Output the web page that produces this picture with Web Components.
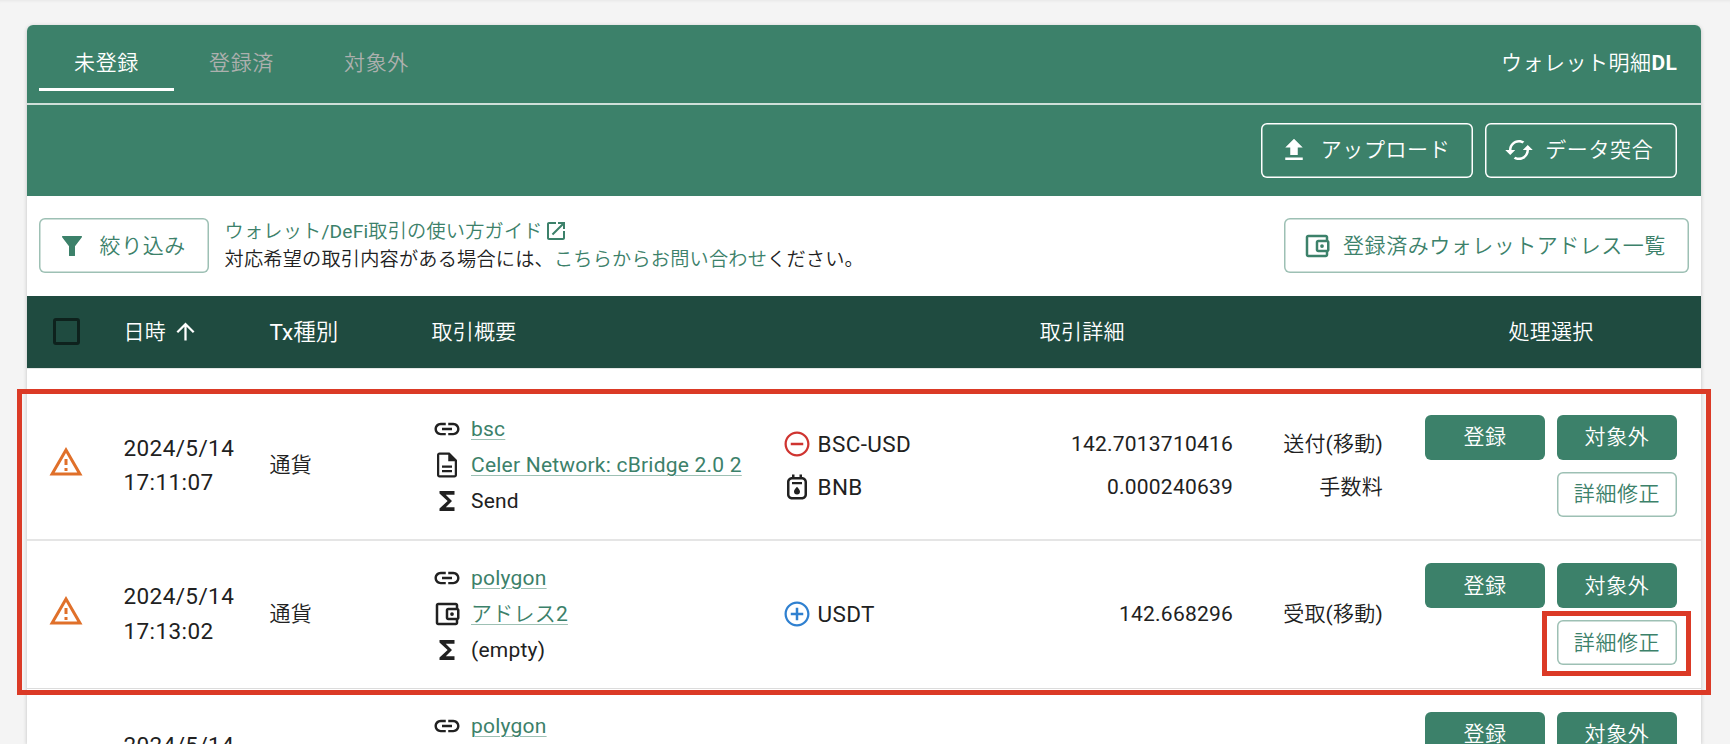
<!DOCTYPE html>
<html lang="ja">
<head>
<meta charset="utf-8">
<title>ウォレット明細</title>
<style>
    body {
        margin: 0;
        height: 744px;
        overflow: hidden;
        background: #f4f4f4;
        box-shadow: inset 0 3px 3px -2px rgba(0,0,0,0.06);
        color: #212121;
        font-family: Roboto, "Noto Sans CJK JP DemiLight", "Noto Sans CJK JP Light", "Noto Sans CJK JP", sans-serif;
        font-size: 21px;
        line-height: 30px;
        letter-spacing: 0.22px;
        --green: #3c816a;
        --dark: #1f4b40;
        --red: #db3a26;
    }
</style>
</head>
<body>
<wallet-page></wallet-page>

<script>
const icons = {
    upload: 'M5 20h14v-2H5v2zM5 10h4v6h6v-6h4l-7-7-7 7z',
    cached: 'M19 8l-4 4h3c0 3.31-2.69 6-6 6-1.01 0-1.97-.25-2.8-.7l-1.46 1.46C8.97 19.54 10.43 20 12 20c4.42 0 8-3.58 8-8h3l-4-4zM6 12c0-3.31 2.69-6 6-6 1.01 0 1.97.25 2.8.7l1.46-1.46C15.03 4.46 13.57 4 12 4c-4.42 0-8 3.58-8 8H1l4 4 4-4H6z',
    filter: 'M4.1 4h15.8v1l-5.5 7.2v7.3q0 .5-.5 .5h-3.8q-.5 0-.5-.5v-7.3L4.1 5z',
    wallet: 'M21 7.28V5c0-1.1-.9-2-2-2H5c-1.11 0-2 .9-2 2v14c0 1.1.89 2 2 2h14c1.1 0 2-.9 2-2v-2.28c.59-.35 1-.98 1-1.72V9c0-.74-.41-1.38-1-1.72zM20 9v6h-7V9h7zM5 19V5h14v2h-6c-1.1 0-2 .9-2 2v6c0 1.1.9 2 2 2h6v2H5zM16 10.5a1.5 1.5 0 1 0 0 3 1.5 1.5 0 1 0 0-3z',
    open: 'M19 19H5V5h7V3H5c-1.11 0-2 .9-2 2v14c0 1.1.89 2 2 2h14c1.1 0 2-.9 2-2v-7h-2v7zM14 3v2h3.59l-9.83 9.83 1.41 1.41L19 6.41V10h2V3h-7z',
    up: 'M4 12l1.41 1.41L11 7.83V20h2V7.83l5.58 5.59L20 12l-8-8-8 8z',
    warn: 'M12 5.99L19.53 19H4.47L12 5.99M12 2L1 21h22L12 2zm1 14h-2v2h2v-2zm0-6h-2v4h2v-4z',
    link: 'M3.9 12c0-1.71 1.39-3.1 3.1-3.1h4V7H7c-2.76 0-5 2.24-5 5s2.24 5 5 5h4v-1.9H7c-1.71 0-3.1-1.39-3.1-3.1zM8 13h8v-2H8v2zm9-6h-4v1.9h4c1.71 0 3.1 1.39 3.1 3.1s-1.39 3.1-3.1 3.1h-4V17h4c2.76 0 5-2.24 5-5s-2.24-5-5-5z',
    doc: 'M8 16h8v1.7H8zm0-3.6h8v1.7H8zM14 2H6c-1.1 0-2 .9-2 2v16c0 1.1.89 2 1.99 2H18c1.1 0 2-.9 2-2V8l-6-6zm4.2 18.2H5.8V3.8H13v5.2h5.2v11.2z',
    sum: 'M18 4H6v2l6.5 6L6 18v2h12v-3h-7l5-5-5-5h7z',
    minus: 'M7 11v2h10v-2H7zm5-9C6.48 2 2 6.48 2 12s4.48 10 10 10 10-4.48 10-10S17.52 2 12 2zm0 18.2c-4.52 0-8.2-3.68-8.2-8.2s3.68-8.2 8.2-8.2 8.2 3.68 8.2 8.2-3.68 8.2-8.2 8.2z',
    plus: 'M13 7h-2v4H7v2h4v4h2v-4h4v-2h-4V7zm-1-5C6.48 2 2 6.48 2 12s4.48 10 10 10 10-4.48 10-10S17.52 2 12 2zm0 18.2c-4.52 0-8.2-3.68-8.2-8.2s3.68-8.2 8.2-8.2 8.2 3.68 8.2 8.2-3.68 8.2-8.2 8.2z',
    gas: 'M16 4V2h-2v2h-4V2H8v2C5.8 4 4 5.8 4 8v10c0 2.2 1.8 4 4 4h8c2.2 0 4-1.8 4-4V8c0-2.2-1.8-4-4-4zm2 14c0 1.1-.9 2-2 2H8c-1.1 0-2-.9-2-2V8c0-1.1.9-2 2-2h8c1.1 0 2 .9 2 2v10zM8 8h8v1.8H8zM12 11.8s-2.4 2.3-2.4 3.8a2.4 2.4 0 0 0 4.8 0c0-1.5-2.4-3.8-2.4-3.8z'
};

class AppIcon extends HTMLElement {
    constructor() {
        super();
        this.attachShadow({ mode: 'open' });
    }

    connectedCallback() {
        this.shadowRoot.innerHTML = `
<style>
    :host { display: inline-flex; flex: none; width: 30px; height: 30px; }
    svg { width: 100%; height: 100%; fill: currentColor; }
</style>
<svg viewBox="0 0 24 24"><path fill-rule="evenodd" d="${icons[this.getAttribute('name')]}"/></svg>`;
    }
}
customElements.define('app-icon', AppIcon);

class AppButton extends HTMLElement {
    constructor() {
        super();
        this.attachShadow({ mode: 'open' });
        this.shadowRoot.innerHTML = `
<style>
    :host {
        display: inline-flex;
        align-items: center;
        justify-content: center;
        box-sizing: border-box;
        height: 45px;
        width: 120px;
        border-radius: 6px;
        letter-spacing: 0.6px;
        white-space: nowrap;
        color: #fff;
        background: var(--green);
    }
    :host([outlined]) {
        color: var(--green);
        background: none;
        box-shadow: inset 0 0 0 1.5px rgba(60,129,106,0.5);
    }
    :host([light]) {
        color: #fff;
        background: none;
        box-shadow: inset 0 0 0 1.5px #fff;
    }
    :host([large]) { height: 55px; width: auto; padding-right: 5px; }
</style>
<slot name="icon"></slot><span><slot></slot></span>`;
    }
}
customElements.define('app-button', AppButton);

class TabBar extends HTMLElement {
    constructor() {
        super();
        this.attachShadow({ mode: 'open' });
        this.shadowRoot.innerHTML = `
<style>
    :host {
        display: flex;
        align-items: flex-end;
        box-sizing: border-box;
        height: 80.5px;
        padding: 0 24px 12px 12px;
        border-bottom: 2px solid #cfdfd9;
        background: var(--green);
        color: #fff;
    }
    .tab {
        display: flex;
        align-items: center;
        justify-content: center;
        box-sizing: border-box;
        width: 135px;
        height: 54px;
        border-bottom: 3px solid transparent;
        letter-spacing: 0.6px;
        color: #adb0ae;
    }
    .on { color: #fff; border-color: #fff; }
    .dl { margin-left: auto; height: 54px; line-height: 52px; letter-spacing: 0.5px; }
    b { font-weight: 700; letter-spacing: 0.2px; }
</style>
<div class="tab on">未登録</div>
<div class="tab">登録済</div>
<div class="tab">対象外</div>
<div class="dl">ウォレット明細<b>DL</b></div>`;
    }
}
customElements.define('tab-bar', TabBar);

class GuideBar extends HTMLElement {
    constructor() {
        super();
        this.attachShadow({ mode: 'open' });
        this.shadowRoot.innerHTML = `
<style>
    :host {
        display: flex;
        align-items: center;
        box-sizing: border-box;
        height: 100px;
        padding: 0 12px;
    }
    .filter { width: 170px; gap: 12.5px; }
    .list { width: 405.5px; gap: 11.5px; margin-left: auto; letter-spacing: 0.52px; }
    .text {
        padding-top: 1px;
        margin-left: 15.5px;
        font-size: 19.2px;
        line-height: 28.5px;
        letter-spacing: 0.19px;
        white-space: nowrap;
    }
    .text div { height: 28.5px; }
    .text app-icon { width: 24px; height: 24px; vertical-align: -5px; margin-left: 1px; }
    a { color: var(--green); }
</style>
<app-button class="filter" outlined large><app-icon slot="icon" name="filter"></app-icon>絞り込み</app-button>
<div class="text">
    <div><a>ウォレット/DeFi取引の使い方ガイド<app-icon name="open"></app-icon></a></div>
    <div>対応希望の取引内容がある場合には、<a>こちらからお問い合わせ</a>ください。</div>
</div>
<app-button class="list" outlined large><app-icon slot="icon" name="wallet"></app-icon>登録済みウォレットアドレス一覧</app-button>`;
    }
}
customElements.define('guide-bar', GuideBar);

const columns = '96.5px 146px 162px 350px 601.5px 42px 252px';

class TableHead extends HTMLElement {
    constructor() {
        super();
        this.attachShadow({ mode: 'open' });
        this.shadowRoot.innerHTML = `
<style>
    :host {
        display: grid;
        grid-template-columns: ${columns};
        align-items: center;
        height: 72px;
        background: var(--dark);
        color: #fff;
    }
    i {
        box-sizing: border-box;
        width: 27px;
        height: 27px;
        margin-left: 25.5px;
        border: 3px solid #0e221d;
        border-radius: 3px;
    }
    .date { display: flex; align-items: center; gap: 6px; }
    .date app-icon { width: 27px; height: 27px; }
    .type { font-size: 22.5px; letter-spacing: 0; }
    .center { text-align: center; }
</style>
<i></i>
<div class="date">日時<app-icon name="up"></app-icon></div>
<div class="type">Tx種別</div>
<div>取引概要</div>
<div class="center">取引詳細</div>
<div></div>
<div class="center">処理選択</div>`;
    }
}
customElements.define('table-head', TableHead);

class TxLine extends HTMLElement {
    constructor() {
        super();
        this.attachShadow({ mode: 'open' });
    }

    connectedCallback() {
        const tag = this.hasAttribute('link') ? 'a' : 'span';
        this.shadowRoot.innerHTML = `
<style>
    :host { display: flex; align-items: center; gap: 9.5px; height: 36px; white-space: nowrap; }
    a {
        color: var(--green);
        text-decoration: underline rgba(60,129,106,0.5) 1px;
        text-underline-offset: 3px;
    }
</style>
<app-icon name="${this.getAttribute('icon')}"></app-icon><${tag}><slot></slot></${tag}>`;
    }
}
customElements.define('tx-line', TxLine);

class TokenLine extends HTMLElement {
    constructor() {
        super();
        this.attachShadow({ mode: 'open' });
    }

    connectedCallback() {
        const icon = this.getAttribute('icon');
        const color = { minus: '#cf3430', plus: '#2f80d0' }[icon] || 'inherit';
        this.shadowRoot.innerHTML = `
<style>
    :host {
        display: grid;
        grid-template-columns: 36px 1fr auto 150px;
        align-items: center;
        height: 43.5px;
        white-space: nowrap;
    }
    app-icon { color: ${color}; }
    .name { font-size: 22.5px; letter-spacing: 0.4px; }
    .kind { text-align: right; }
</style>
<app-icon name="${icon}"></app-icon>
<div class="name"><slot></slot></div>
<div>${this.getAttribute('amount')}</div>
<div class="kind">${this.getAttribute('kind')}</div>`;
    }
}
customElements.define('token-line', TokenLine);

class TxRow extends HTMLElement {
    constructor() {
        super();
        this.attachShadow({ mode: 'open' });
    }

    connectedCallback() {
        this.shadowRoot.innerHTML = `
<style>
    :host {
        display: grid;
        grid-template-columns: ${columns};
        align-items: center;
        box-sizing: border-box;
        height: 148.5px;
        border-bottom: 2px solid #e5e5e5;
    }
    :host([thin]) { border-bottom: 1px solid #dcdcdc; padding-bottom: 1px; }
    .warn { width: 36px; height: 36px; margin-left: 21px; margin-bottom: 6px; color: #e0702a; }
    .date { font-size: 22.5px; line-height: 34.5px; letter-spacing: 0.4px; }
    .buttons { display: flex; flex-wrap: wrap; justify-content: flex-end; gap: 12px; padding-top: 1px; }
</style>
<app-icon class="warn" name="warn"></app-icon>
<div class="date">${this.getAttribute('date')}<br>${this.getAttribute('time')}</div>
<div>通貨</div>
<div><slot name="summary"></slot></div>
<div><slot name="token"></slot></div>
<div></div>
<div class="buttons">
    <app-button>登録</app-button>
    <app-button>対象外</app-button>
    <app-button outlined>詳細修正</app-button>
</div>`;
    }
}
customElements.define('tx-row', TxRow);

// red frame laid over the part of the table it points out
class MarkFrame extends HTMLElement {
    constructor() {
        super();
        this.attachShadow({ mode: 'open' });
        this.shadowRoot.innerHTML = `
<style>
    :host {
        position: absolute;
        box-sizing: border-box;
        border: 5px solid var(--red);
        pointer-events: none;
    }
</style>`;
    }
}
customElements.define('mark-frame', MarkFrame);

class WalletPage extends HTMLElement {
    constructor() {
        super();
        this.attachShadow({ mode: 'open' });
        this.shadowRoot.innerHTML = `
<style>
    :host { display: block; box-sizing: border-box; height: 744px; padding: 24.5px 29px 0 27px; }
    .card {
        height: 719.5px;
        overflow: hidden;
        border-radius: 6px 6px 0 0;
        background: #fff;
        box-shadow: 0 1px 4px rgba(0,0,0,0.2);
    }
    .actions {
        display: flex;
        align-items: center;
        justify-content: flex-end;
        gap: 12px;
        height: 90.5px;
        padding-right: 24px;
        background: var(--green);
    }
    .upload { width: 212px; gap: 12px; }
    .match { width: 192px; gap: 11.5px; }
    .space { box-sizing: border-box; height: 24.5px; border-top: 1px solid #e4e7e6; }
    .rows-mark { left: 17px; top: 389px; width: 1694px; height: 306px; }
    .edit-mark { left: 1542px; top: 611px; width: 149px; height: 65px; }
</style>
<div class="card">
    <tab-bar></tab-bar>
    <div class="actions">
        <app-button class="upload" light large><app-icon slot="icon" name="upload"></app-icon>アップロード</app-button>
        <app-button class="match" light large><app-icon slot="icon" name="cached"></app-icon>データ突合</app-button>
    </div>
    <guide-bar></guide-bar>
    <table-head></table-head>
    <div class="space"></div>
    <tx-row date="2024/5/14" time="17:11:07">
        <tx-line slot="summary" icon="link" link>bsc</tx-line>
        <tx-line slot="summary" icon="doc" link>Celer Network: cBridge 2.0 2</tx-line>
        <tx-line slot="summary" icon="sum">Send</tx-line>
        <token-line slot="token" icon="minus" amount="142.7013710416" kind="送付(移動)">BSC-USD</token-line>
        <token-line slot="token" icon="gas" amount="0.000240639" kind="手数料">BNB</token-line>
    </tx-row>
    <tx-row thin date="2024/5/14" time="17:13:02">
        <tx-line slot="summary" icon="link" link>polygon</tx-line>
        <tx-line slot="summary" icon="wallet" link>アドレス2</tx-line>
        <tx-line slot="summary" icon="sum">(empty)</tx-line>
        <token-line slot="token" icon="plus" amount="142.668296" kind="受取(移動)">USDT</token-line>
    </tx-row>
    <tx-row date="2024/5/14" time="17:13:02">
        <tx-line slot="summary" icon="link" link>polygon</tx-line>
        <tx-line slot="summary" icon="wallet" link>アドレス2</tx-line>
        <tx-line slot="summary" icon="sum">(empty)</tx-line>
    </tx-row>
</div>
<mark-frame class="rows-mark"></mark-frame>
<mark-frame class="edit-mark"></mark-frame>`;
    }
}
customElements.define('wallet-page', WalletPage);
</script>
</body>
</html>
